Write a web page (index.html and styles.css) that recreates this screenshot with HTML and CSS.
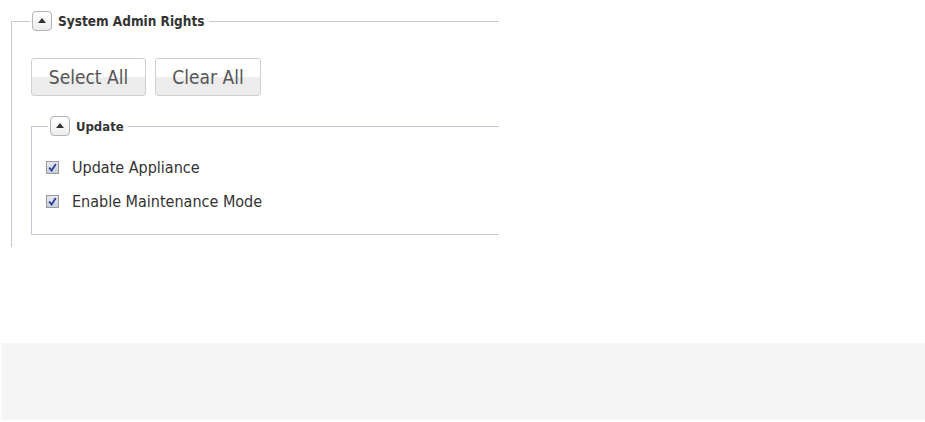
FILE: index.html
```html
<!DOCTYPE html>
<html>
<head>
<meta charset="utf-8">
<link rel="stylesheet" href="styles.css">
</head>
<body>
<div class="page">
  <fieldset class="group outer">
    <legend class="legend">
      <span class="toggle"><span class="tri"></span></span>
      <span class="legend-text">System Admin Rights</span>
    </legend>
    <div class="actions">
      <button class="btn">Select All</button>
      <button class="btn">Clear All</button>
    </div>
    <fieldset class="group inner">
      <legend class="legend">
        <span class="toggle"><span class="tri"></span></span>
        <span class="legend-text">Update</span>
      </legend>
      <label class="row">
        <span class="check"><svg width="9" height="9" viewBox="0 0 9 9"><path d="M1.2 4.6 L3.6 7.4 L7.8 1" fill="none" stroke="#2b3f9a" stroke-width="1.8"/></svg></span>
        <span class="row-text">Update Appliance</span>
      </label>
      <label class="row">
        <span class="check"><svg width="9" height="9" viewBox="0 0 9 9"><path d="M1.2 4.6 L3.6 7.4 L7.8 1" fill="none" stroke="#2b3f9a" stroke-width="1.8"/></svg></span>
        <span class="row-text">Enable Maintenance Mode</span>
      </label>
    </fieldset>
  </fieldset>
  <div class="spacer"></div>
  <div class="footer"></div>
</div>
</body>
</html>
```

FILE: styles.css
```css
html, body {
  margin: 0;
  padding: 0;
  background: #fff;
}
body {
  font-family: "DejaVu Sans", "Liberation Sans", sans-serif;
  font-stretch: condensed;
  color: #333;
}
.page {
  display: flex;
  flex-direction: column;
  width: 925px;
  height: 422px;
}
.group {
  margin: 0;
  border: 0;
  border-top: 1px solid #c6c8d6;
  border-left: 1px solid #c6c8d6;
  min-width: 0;
}
.outer {
  width: 488px;
  box-sizing: border-box;
  margin: 11px 0 0 11px;
  padding: 27px 0 12px 19px;
}
.inner {
  margin-top: 20px;
  border-bottom: 1px solid #c6c8d6;
  padding: 21px 0 23px 14px;
}
.outer > .legend { margin-left: -1px; }
.inner > .legend { margin-left: 2px; }
.legend {
  padding: 0 4px 0 2px;
  display: flex;
  align-items: center;
  height: 20px;
}
.toggle {
  width: 18px;
  height: 18px;
  border: 1px solid #b4b4b4;
  border-radius: 4px;
  background: linear-gradient(#ffffff, #ececec);
  display: flex;
  align-items: center;
  justify-content: center;
  box-sizing: content-box;
}
.tri {
  width: 0;
  height: 0;
  border-left: 4px solid transparent;
  border-right: 4px solid transparent;
  border-bottom: 5px solid #333;
  margin-top: -1px;
}
.legend-text {
  margin-left: 6px;
  font-weight: bold;
  font-size: 13.5px;
  color: #333;
}
.inner .legend-text { font-size: 13px; }
.actions {
  display: flex;
  gap: 9px;
}
.btn {
  font-family: "DejaVu Sans", "Liberation Sans", sans-serif;
  font-stretch: condensed;
  font-size: 19px;
  color: #555;
  height: 38px;
  padding: 0 10px;
  border: 1px solid #cfcfcf;
  border-radius: 3px;
  background: linear-gradient(#ffffff 0, #ffffff 48%, #ececec 52%, #ececec 100%);
  margin: 0;
}
.btn:first-child { width: 115px; }
.btn:last-child { width: 106px; }
.row {
  display: flex;
  align-items: center;
  height: 20px;
}
.row + .row { margin-top: 14px; }
.check {
  width: 11px;
  height: 11px;
  border: 1px solid #9a9a9a;
  background: linear-gradient(#e4e8f0, #c8cfdc);
  display: flex;
  align-items: center;
  justify-content: center;
}
.row-text {
  margin-left: 13px;
  font-size: 16px;
  color: #333;
}
.spacer { flex: 1; }
.footer {
  margin-left: 1px;
  height: 77px;
  margin-bottom: 2px;
  background: #f5f5f5;
}
```
